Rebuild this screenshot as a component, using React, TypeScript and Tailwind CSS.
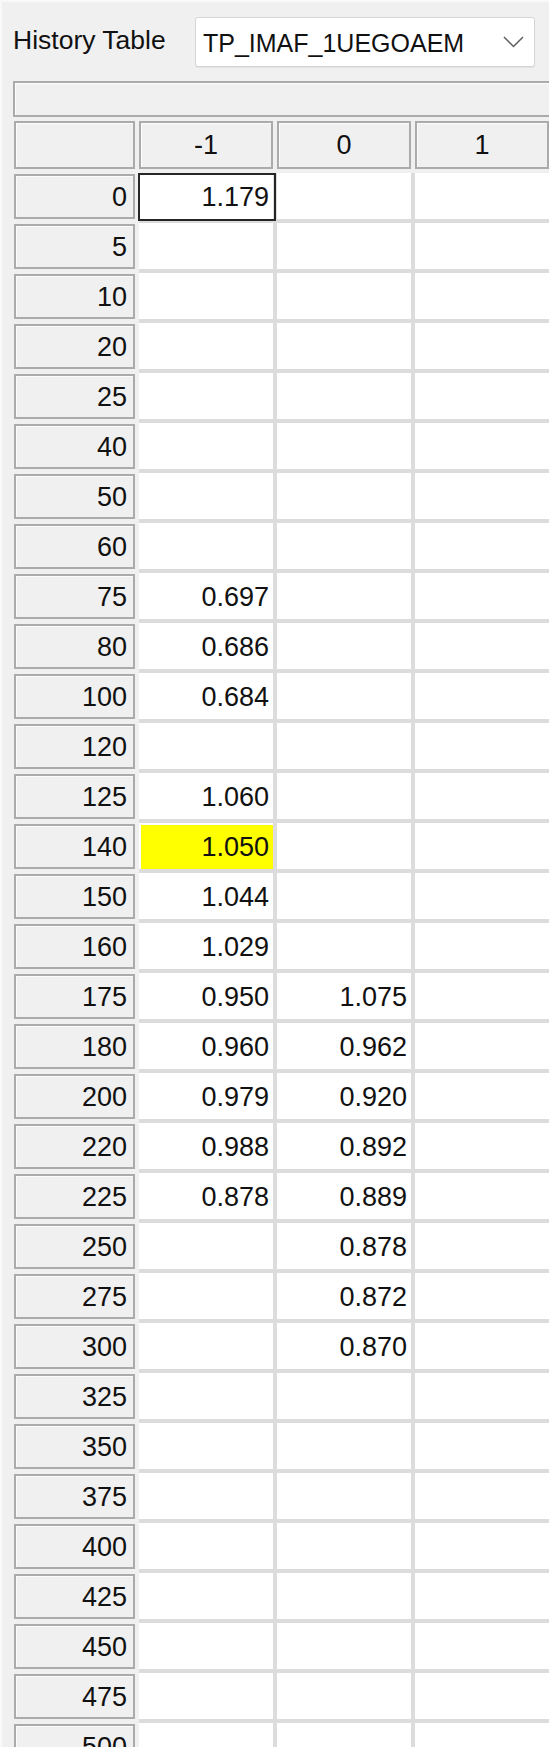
import React from 'react';

type Row = [string, string, string, string];

const ROWS: Row[] = [
  ['0', '1.179', '', ''],
  ['5', '', '', ''],
  ['10', '', '', ''],
  ['20', '', '', ''],
  ['25', '', '', ''],
  ['40', '', '', ''],
  ['50', '', '', ''],
  ['60', '', '', ''],
  ['75', '0.697', '', ''],
  ['80', '0.686', '', ''],
  ['100', '0.684', '', ''],
  ['120', '', '', ''],
  ['125', '1.060', '', ''],
  ['140', '1.050', '', ''],
  ['150', '1.044', '', ''],
  ['160', '1.029', '', ''],
  ['175', '0.950', '1.075', ''],
  ['180', '0.960', '0.962', ''],
  ['200', '0.979', '0.920', ''],
  ['220', '0.988', '0.892', ''],
  ['225', '0.878', '0.889', ''],
  ['250', '', '0.878', ''],
  ['275', '', '0.872', ''],
  ['300', '', '0.870', ''],
  ['325', '', '', ''],
  ['350', '', '', ''],
  ['375', '', '', ''],
  ['400', '', '', ''],
  ['425', '', '', ''],
  ['450', '', '', ''],
  ['475', '', '', ''],
  ['500', '', '', ''],
];

const COLUMNS = ['-1', '0', '1'];

// current cell and the highlighted cell, as [row, col]
const CURRENT: [number, number] = [0, 0];
const MARKED: [number, number] = [13, 0];

const headerBox =
  'border-2 border-[#ababab] bg-[#f0f0f0] shadow-[inset_1px_1px_0_#fcfcfc]';

const Chevron = () => (
  <svg width="21" height="12" viewBox="0 0 21 12" fill="none">
    <polyline points="1,1 10.5,10.5 20,1" stroke="#5f5f5f" strokeWidth="1.5" />
  </svg>
);

const App = () => {
  return (
    <div className="w-[549px] h-[1747px] overflow-hidden bg-[#f0f0f0] text-[#111] font-['Liberation_Sans',Arial,sans-serif] shadow-[inset_2px_2px_0_#f9f9f9]">
      {/* toolbar */}
      <div className="h-[81px] flex items-start pt-[17px] pl-[13px]">
        <div className="w-[182px] h-[47px] flex items-center text-[26.5px] leading-none">
          History Table
        </div>
        <div className="w-[340px] h-[50px] flex items-center justify-between bg-white border border-[#d5d5d5] rounded-[3px] pl-[7px] pr-[10px] shadow-[0_1px_0_#e2e2e2]">
          <span className="text-[25px] leading-none pt-[3px]">TP_IMAF_1UEGOAEM</span>
          <Chevron />
        </div>
      </div>

      {/* table */}
      <div className="ml-[13px] h-[36px] border-2 border-r-0 border-[#ababab] shadow-[inset_1px_1px_0_#fcfcfc]" />

      <div className="flex gap-[4px] mt-[4px] ml-[14px] h-[48px]">
        <div className={`w-[121px] h-[48px] shrink-0 ${headerBox}`} />
        {COLUMNS.map((c) => (
          <div
            key={c}
            className={`w-[134px] h-[48px] shrink-0 flex items-center justify-center text-[27px] leading-none ${headerBox}`}
          >
            {c}
          </div>
        ))}
      </div>

      <div className="mt-[4px]">
        {ROWS.map((row, r) => (
          <div key={row[0]} className="flex h-[50px]">
            <div className="pl-[14px] pr-[4px] pt-[1px] shrink-0">
              <div
                className={`w-[121px] h-[45px] flex items-center justify-end pr-[6px] pt-[2px] text-[27px] leading-none ${headerBox}`}
              >
                {row[0]}
              </div>
            </div>
            <div className="flex gap-[4px] bg-[#dcdcdc] pb-[4px] h-[50px]">
              {row.slice(1).map((v, c) => {
                const isCurrent = r === CURRENT[0] && c === CURRENT[1];
                const isMarked = r === MARKED[0] && c === MARKED[1];
                return (
                  <div
                    key={c}
                    className={`relative w-[134px] h-[46px] shrink-0 flex items-center justify-end pr-[4px] pt-[2px] text-[27px] leading-none ${
                      isMarked ? 'bg-[#ffff00] shadow-[inset_2px_2px_0_#fff]' : 'bg-white'
                    }`}
                  >
                    {v}
                    {isCurrent && (
                      <div className="absolute -left-px top-0 -right-[3px] -bottom-[2px] border-2 border-[#262626]" />
                    )}
                  </div>
                );
              })}
            </div>
          </div>
        ))}
      </div>
    </div>
  );
};

export default App;
